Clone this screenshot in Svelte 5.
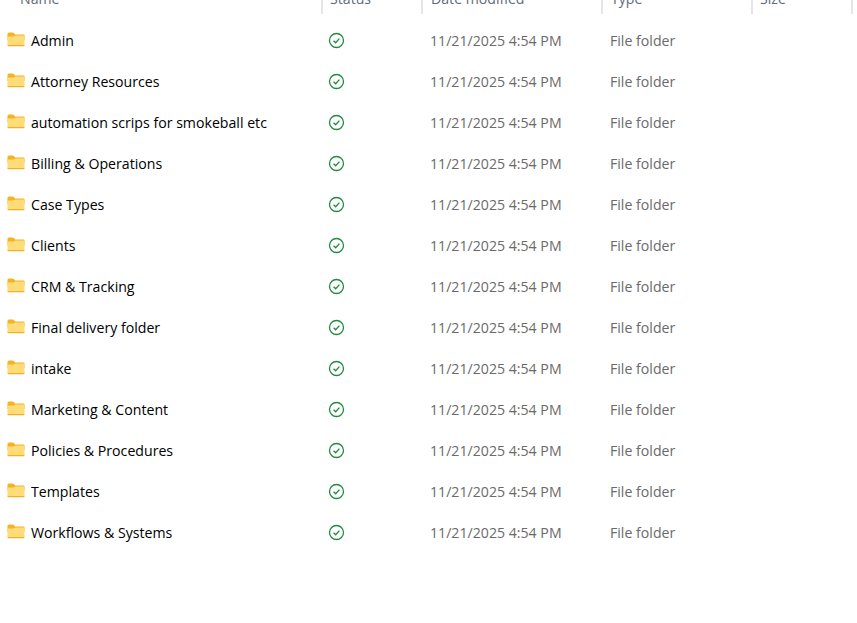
<script>
  const names = [
    'Admin',
    'Attorney Resources',
    'automation scrips for smokeball etc',
    'Billing & Operations',
    'Case Types',
    'Clients',
    'CRM & Tracking',
    'Final delivery folder',
    'intake',
    'Marketing & Content',
    'Policies & Procedures',
    'Templates',
    'Workflows & Systems'
  ];
  const columns = ['Name', 'Status', 'Date modified', 'Type', 'Size'];
</script>

<div class="explorer">
  <div class="head">
    {#each columns as c}
      <div class="hcell">{c}</div>
    {/each}
  </div>
  <div class="rows">
    {#each names as n}
      <div class="row">
        <div class="name">
          <svg class="folder" width="18" height="15" viewBox="0 0 19 15" preserveAspectRatio="none">
            <path d="M0.5 2 Q0.5 0.5 2 0.5 H6 Q6.8 0.5 7.4 1.2 L8.6 2.5 H17.5 Q18.5 2.5 18.5 3.5 V8 H0.5 Z" fill="#f5b321"/>
            <path d="M0.5 4.6 H7.2 L8.8 3.6 H17.5 Q18.5 3.6 18.5 4.6 V13 Q18.5 14 17.5 14 H1.5 Q0.5 14 0.5 13 Z" fill="#fedc78"/>
            <path d="M0.5 13 H18.5 Q18.5 14.3 17.5 14.3 H1.5 Q0.5 14.3 0.5 13 Z" fill="#efb02e"/>
          </svg>
          <span>{n}</span>
        </div>
        <div class="status">
          <svg width="17" height="17" viewBox="0 0 17 17" fill="none" stroke="#218a3f">
            <circle cx="8.5" cy="8.5" r="7" stroke-width="1.3"/>
            <path d="M5.6 8.8 L7.7 10.8 L11.4 6.6" stroke-width="1.3"/>
          </svg>
        </div>
        <div class="date">11/21/2025 4:54 PM</div>
        <div class="type">File folder</div>
        <div class="size"></div>
      </div>
    {/each}
  </div>
</div>

<style>
  :global(body) {
    margin: 0;
    background: #fff;
    overflow: hidden;
  }
  .explorer {
    width: 857px;
    height: 623px;
    overflow: hidden;
    font-family: "Open Sans", "Noto Sans", sans-serif;
    font-size: 14.15px;
  }
  .head,
  .row {
    display: grid;
    grid-template-columns: 323px 100px 180px 150px 100px;
  }
  .head {
    height: 14px;
    overflow: hidden;
    color: #5f6b7a;
  }
  .hcell {
    height: 14px;
    line-height: 14px;
    padding-left: 8px;
    margin-top: -8px;
    padding-bottom: 8px;
    border-right: 2px solid #e5e5e5;
    margin-right: 0;
  }
  .hcell:first-child {
    padding-left: 20px;
  }
  .hcell:nth-child(2),
  .hcell:nth-child(5) {
    padding-left: 7px;
  }
  .rows {
    padding-top: 5.5px;
  }
  .row {
    height: 41px;
    align-items: center;
    color: #6a6a6a;
  }
  .name {
    display: flex;
    align-items: center;
    color: #000;
    padding-left: 7px;
    gap: 6px;
  }
  .folder {
    margin-top: -2px;
  }
  .status {
    display: flex;
    padding-left: 5px;
  }
  .date {
    padding-left: 7px;
  }
  .type {
    padding-left: 7px;
  }
</style>
